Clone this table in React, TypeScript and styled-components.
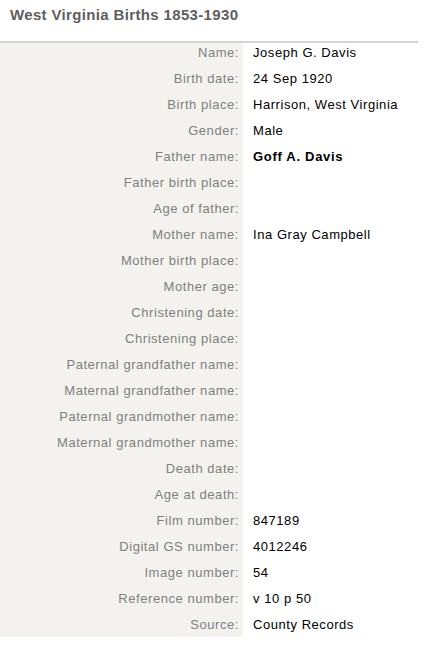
import React from "react";
import styled, { createGlobalStyle } from "styled-components";

const Global = createGlobalStyle`
  html, body { margin: 0; padding: 0; background: #fff; }
  body { font-family: "Liberation Sans", Arial, sans-serif; }
`;

const Page = styled.div`
  width: 432px;
  height: 660px;
  background: #fff;
`;

const Title = styled.h1`
  margin: 0;
  padding: 6px 0 0 10px;
  height: 35px;
  box-sizing: border-box;
  font-size: 15px;
  line-height: 18px;
  font-weight: bold;
  letter-spacing: 0.35px;
  color: #5e5e5e;
`;

const Table = styled.div`
  width: 418px;
  border-top: 2px solid #d4d4d4;
  margin-top: 6px;
  display: grid;
  grid-template-columns: 243px 1fr;
`;

const Label = styled.div<{ $last?: boolean }>`
  background: #f3f2ee;
  text-align: right;
  color: #808080;
  font-size: 13px;
  line-height: 16px;
  letter-spacing: 0.55px;
  padding: 2px 4px ${(p) => (p.$last ? "4px" : "8px")} 0;
  white-space: nowrap;
`;

const Value = styled.div<{ $bold?: boolean; $last?: boolean }>`
  color: #000;
  font-size: 13px;
  line-height: 16px;
  letter-spacing: ${(p) => (p.$bold ? "0.7px" : "0.55px")};
  padding: 2px 0 ${(p) => (p.$last ? "4px" : "8px")} 10px;
  font-weight: ${(p) => (p.$bold ? "bold" : "normal")};
  white-space: nowrap;
`;

const rows: [string, string, boolean?][] = [
  ["Name", "Joseph G. Davis"],
  ["Birth date", "24 Sep 1920"],
  ["Birth place", "Harrison, West Virginia"],
  ["Gender", "Male"],
  ["Father name", "Goff A. Davis", true],
  ["Father birth place", ""],
  ["Age of father", ""],
  ["Mother name", "Ina Gray Campbell"],
  ["Mother birth place", ""],
  ["Mother age", ""],
  ["Christening date", ""],
  ["Christening place", ""],
  ["Paternal grandfather name", ""],
  ["Maternal grandfather name", ""],
  ["Paternal grandmother name", ""],
  ["Maternal grandmother name", ""],
  ["Death date", ""],
  ["Age at death", ""],
  ["Film number", "847189"],
  ["Digital GS number", "4012246"],
  ["Image number", "54"],
  ["Reference number", "v 10 p 50"],
  ["Source", "County Records"],
];

export default function App() {
  return (
    <Page>
      <Global />
      <Title>West Virginia Births 1853-1930</Title>
      <Table>
        {rows.map(([l, v, b], i) => {
          const last = i === rows.length - 1;
          return (
            <React.Fragment key={l}>
              <Label $last={last}>{l}:</Label>
              <Value $bold={b} $last={last}>{v || "\u00a0"}</Value>
            </React.Fragment>
          );
        })}
      </Table>
    </Page>
  );
}
